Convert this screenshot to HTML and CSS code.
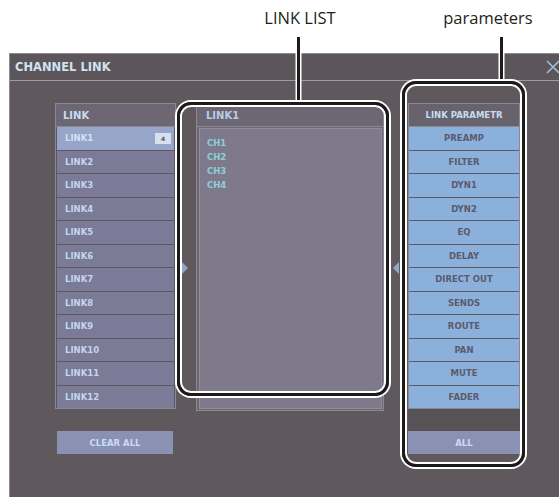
FILE: index.html
```html
<!DOCTYPE html>
<html>
<head>
  <meta charset="UTF-8">
  <title>Channel Link</title>
  <link rel="stylesheet" href="styles.css">
</head>
<body>
  <!-- Annotation labels -->
  <div class="labels">
    <span class="label label-list">LINK LIST</span>
    <span class="label label-params">parameters</span>
  </div>

  <div class="window">
    <div class="titlebar">
      <span class="title">CHANNEL LINK</span>
      <svg class="close" width="14" height="14" viewBox="0 0 14 14">
        <path d="M1 1 L13 13 M13 1 L1 13" stroke="#9fbbdc" stroke-width="1.6" fill="none"/>
      </svg>
    </div>

    <div class="body">
      <!-- Link selector -->
      <div class="col col-left">
        <div class="list link-list">
          <div class="list-head">LINK</div>
          <div class="rows">
            <div class="row selected">LINK1 <span class="badge">4</span></div>
            <div class="row">LINK2</div>
            <div class="row">LINK3</div>
            <div class="row">LINK4</div>
            <div class="row">LINK5</div>
            <div class="row">LINK6</div>
            <div class="row">LINK7</div>
            <div class="row">LINK8</div>
            <div class="row">LINK9</div>
            <div class="row">LINK10</div>
            <div class="row">LINK11</div>
            <div class="row">LINK12</div>
          </div>
        </div>
        <button class="btn btn-clear">CLEAR ALL</button>
      </div>

      <div class="gap gap-left"><span class="arrow arrow-right"></span></div>

      <!-- Channels in link -->
      <div class="list members">
        <div class="list-head">LINK1</div>
        <div class="members-body">
          <div class="ch">CH1</div>
          <div class="ch">CH2</div>
          <div class="ch">CH3</div>
          <div class="ch">CH4</div>
        </div>
      </div>

      <div class="gap gap-right"><span class="arrow arrow-left"></span></div>

      <!-- Link parameters -->
      <div class="col col-right">
        <div class="list params">
          <div class="list-head center dark">LINK PARAMETR</div>
          <div class="rows">
            <div class="prow">PREAMP</div>
            <div class="prow">FILTER</div>
            <div class="prow">DYN1</div>
            <div class="prow">DYN2</div>
            <div class="prow">EQ</div>
            <div class="prow">DELAY</div>
            <div class="prow">DIRECT OUT</div>
            <div class="prow">SENDS</div>
            <div class="prow">ROUTE</div>
            <div class="prow">PAN</div>
            <div class="prow">MUTE</div>
            <div class="prow">FADER</div>
          </div>
        </div>
        <div class="filler"></div>
        <button class="btn btn-all">ALL</button>
      </div>
    </div>
  </div>

  <!-- Callout frames -->
  <div class="leader leader-list"></div>
  <div class="leader leader-params"></div>
  <div class="callout callout-list"></div>
  <div class="callout callout-params"></div>
</body>
</html>
```

FILE: styles.css
```css
body {
  margin: 0;
  padding: 0;
  background: #fff;
  font-family: "DejaVu Sans", sans-serif;
  width: 559px;
  height: 497px;
  overflow: hidden;
  position: relative;
}
.labels {
  height: 53px;
  position: relative;
  font-family: "Open Sans", sans-serif;
}
.label {
  position: absolute;
  top: 6px;
  font-size: 16.5px;
  color: #231f20;
  transform: translateX(-50%);
  white-space: nowrap;
}
.label-list {
  left: 300px;
}
.label-params {
  left: 488px;
}
.window {
  margin-left: 9px;
  width: 560px;
  height: 443px;
  background: #5f595d;
  border-top: 1px solid #8a8a9a;
  border-left: 1px solid #8a8a9a;
}
.titlebar {
  height: 26px;
  display: flex;
  align-items: center;
  justify-content: space-between;
  padding-left: 5px;
  background: #5c565a;
  border-bottom: 1px solid #9a9aaa;
}
.title {
  font-weight: bold;
  font-size: 11.5px;
  color: #d0e2f4;
}
.close {
  margin-right: 10px;
}
.body {
  display: flex;
  align-items: flex-start;
  padding: 22px 0 0 45px;
}
.col {
  display: flex;
  flex-direction: column;
}
.col-left {
  width: 121px;
}
.col-right {
  width: 112px;
}
.list {
  border: 1px solid #8b8896;
  background: #6c6772;
}
.list-head {
  height: 22px;
  display: flex;
  align-items: center;
  padding-left: 7px;
  font-weight: bold;
  font-size: 10px;
  color: #c8dcf0;
  border-bottom: 1px solid #8b8896;
}
.list-head.center {
  justify-content: center;
  padding-left: 0;
  font-size: 8.5px;
}
.list-head.dark {
  background: #67626c;
}
.rows {
  background: #5d5860;
}
.row {
  height: 22.5px;
  margin: 0 1px;
  border-bottom: 1px solid #5d5860;
  background: #7b7a97;
  display: flex;
  align-items: center;
  padding-left: 8px;
  font-weight: bold;
  font-size: 8.5px;
  color: #c4d6ec;
}
.row:last-child {
  border-bottom: none;
}
.row.selected {
  background: #97a5c8;
  color: #d2e2f4;
}
.badge {
  margin-left: auto;
  margin-right: 3px;
  width: 16px;
  height: 11px;
  background: #d6e0ee;
  color: #555;
  font-size: 6px;
  display: flex;
  align-items: center;
  justify-content: center;
}
.btn {
  border: none;
  height: 23px;
  background: #8a91b3;
  color: #c9dcf2;
  font-family: "DejaVu Sans", sans-serif;
  font-weight: bold;
  font-size: 8.5px;
  padding: 0;
}
.btn-clear {
  margin: 22px 0 0 2px;
  width: 116px;
}
.btn-all {
  width: 112px;
}
.gap {
  height: 307px;
  display: flex;
  align-items: flex-start;
  padding-top: 159px;
  box-sizing: border-box;
}
.gap-left {
  width: 20px;
  padding-left: 6px;
}
.gap-right {
  width: 24px;
  padding-left: 9px;
}
.arrow {
  width: 0;
  height: 0;
  border-top: 6px solid transparent;
  border-bottom: 6px solid transparent;
}
.arrow-right {
  border-left: 6px solid #8ea8cc;
}
.arrow-left {
  border-right: 6px solid #8ea8cc;
}
.members {
  width: 186px;
}
.members .list-head {
  padding-left: 9px;
  color: #b9cde8;
}
.members-body {
  height: 272px;
  margin: 1px 1px 1px 2px;
  border: 1px solid #8f8c9c;
  background: #7e7a8c;
  padding: 7px 0 0 7px;
}
.ch {
  font-weight: bold;
  font-size: 8.5px;
  line-height: 14px;
  color: #8dd0d8;
}
.params {
  width: 110px;
}
.prow {
  height: 22.5px;
  border-bottom: 1px solid #5e5a64;
  background: #8cb0dc;
  display: flex;
  align-items: center;
  justify-content: center;
  font-weight: bold;
  font-size: 8.5px;
  color: #5a5b6c;
}
.prow:last-child {
  border-bottom: none;
}
.filler {
  height: 22px;
  background: #575256;
}
.leader {
  position: absolute;
  width: 3px;
  background: #1b1b1b;
  box-shadow: 0 0 0 1.5px #fff;
}
.leader-list {
  left: 297px;
  top: 37px;
  height: 66px;
}
.leader-params {
  left: 500px;
  top: 37px;
  height: 45px;
}
.callout {
  position: absolute;
  border: 3px solid #1b1b1b;
  border-radius: 14px;
  box-shadow: 0 0 0 2px #fff, inset 0 0 0 2px #fff;
}
.callout-list {
  left: 177px;
  top: 102px;
  width: 206px;
  height: 288px;
}
.callout-params {
  left: 402px;
  top: 81px;
  width: 117px;
  height: 380px;
}
```
